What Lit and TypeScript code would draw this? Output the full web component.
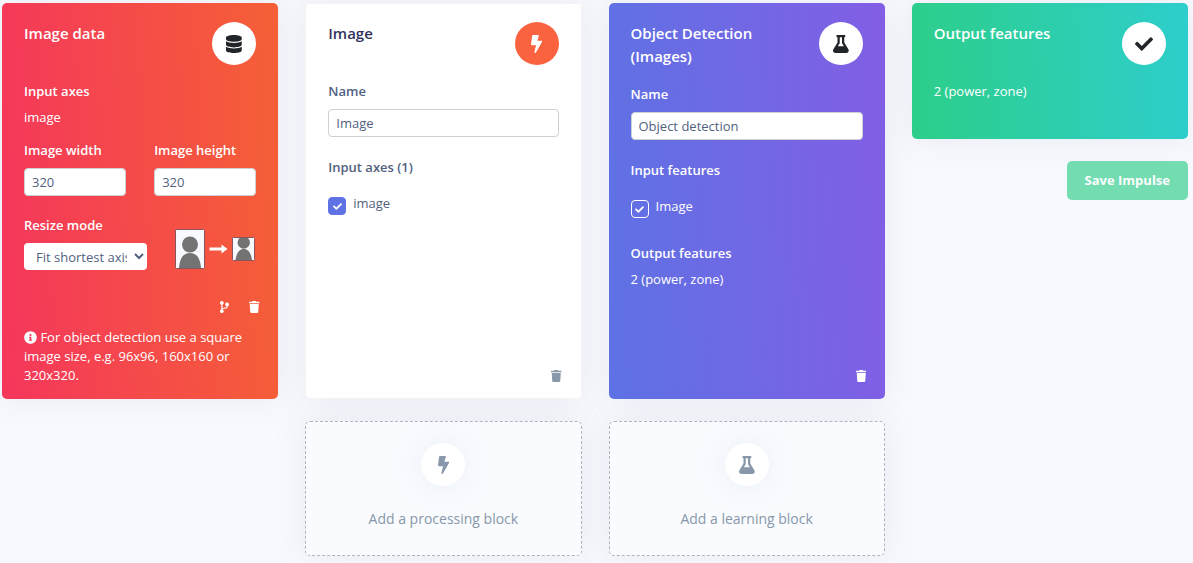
import { LitElement, html, css, svg } from "lit";
import { customElement, property } from "lit/decorators.js";

type IconDef = { w: number; d: string };

const ICONS: Record<string, IconDef> = {
  database: {
    w: 448,
    d: "M448 73.143v45.714C448 159.143 347.667 192 224 192S0 159.143 0 118.857V73.143C0 32.857 100.333 0 224 0s224 32.857 224 73.143zM448 176v102.857C448 319.143 347.667 352 224 352S0 319.143 0 278.857V176c48.125 33.143 136.208 48.572 224 48.572S399.874 209.143 448 176zm0 160v102.857C448 479.143 347.667 512 224 512S0 479.143 0 438.857V336c48.125 33.143 136.208 48.572 224 48.572S399.874 369.143 448 336z",
  },
  bolt: {
    w: 320,
    d: "M296 160H180.6l42.6-129.8C227.2 15 215.7 0 200 0H56C44 0 33.8 8.9 32.2 20.8l-32 240C-1.7 275.2 9.5 288 24 288h118.7L96.6 482.5c-3.6 15.2 8 29.5 23.3 29.5 8.4 0 16.4-4.4 20.8-12l176-304c9.3-15.9-2.2-36-20.7-36z",
  },
  flask: {
    w: 448,
    d: "M437.2 403.5L320 215V64h8c13.3 0 24-10.7 24-24V24c0-13.3-10.7-24-24-24H120c-13.3 0-24 10.7-24 24v16c0 13.3 10.7 24 24 24h8v151L10.8 403.5C-18.5 450.6 15.3 512 70.9 512h306.2c55.7 0 89.4-61.5 60.1-108.5zM137.9 320l48.2-77.6c3.7-5.2 5.8-11.6 5.8-18.4V64h64v160c0 6.9 2.2 13.2 5.8 18.4l48.2 77.6h-172z",
  },
  check: {
    w: 512,
    d: "M173.898 439.404l-166.4-166.4c-9.997-9.997-9.997-26.206 0-36.204l36.203-36.204c9.997-9.998 26.207-9.998 36.204 0L192 312.69 432.095 72.596c9.997-9.997 26.207-9.997 36.204 0l36.203 36.204c9.997 9.997 9.997 26.206 0 36.204l-294.4 294.401c-9.998 9.997-26.207 9.997-36.204-.001z",
  },
  trash: {
    w: 448,
    d: "M432 32H312l-9.4-18.7A24 24 0 0 0 281.1 0H166.8a23.72 23.72 0 0 0-21.4 13.3L136 32H16A16 16 0 0 0 0 48v32a16 16 0 0 0 16 16h416a16 16 0 0 0 16-16V48a16 16 0 0 0-16-16zM53.2 467a48 48 0 0 0 47.9 45h245.8a48 48 0 0 0 47.9-45L416 128H32z",
  },
  branch: {
    w: 384,
    d: "M384 144c0-44.2-35.8-80-80-80s-80 35.8-80 80c0 36.4 24.3 67.1 57.5 76.8-.6 16.1-4.2 28.5-11 36.9-15.4 19.2-49.3 22.4-85.2 25.7-28.2 2.6-57.4 5.4-81.3 16.9v-144c32.5-10.2 56-40.5 56-76.3 0-44.2-35.8-80-80-80S0 35.8 0 80c0 35.8 23.5 66.1 56 76.3v199.3C23.5 365.9 0 396.2 0 432c0 44.2 35.8 80 80 80s80-35.8 80-80c0-34-21.2-63.1-51.2-74.6 3.1-5.2 7.8-9.8 14.9-13.4 16.2-8.2 40.4-10.4 66.1-12.8 42.2-3.9 90-8.4 118.2-43.4 14-17.4 21.1-39.8 21.6-67.9 31.6-10.8 54.4-40.7 54.4-75.9z",
  },
  info: {
    w: 512,
    d: "M256 8C119.043 8 8 119.083 8 256c0 136.997 111.043 248 248 248s248-111.003 248-248C504 119.083 392.957 8 256 8zm0 110c23.196 0 42 18.804 42 42s-18.804 42-42 42-42-18.804-42-42 18.804-42 42-42zm56 254c0 6.627-5.373 12-12 12h-88c-6.627 0-12-5.373-12-12v-24c0-6.627 5.373-12 12-12h12v-64h-12c-6.627 0-12-5.373-12-12v-24c0-6.627 5.373-12 12-12h64c6.627 0 12 5.373 12 12v100h12c6.627 0 12 5.373 12 12v24z",
  },
};

const icon = (name: string, cls = "icon") => html`<svg
  class=${cls}
  viewBox="0 0 ${ICONS[name].w} 512"
  aria-hidden="true"
>
  ${svg`<path fill="currentColor" d=${ICONS[name].d} />`}
</svg>`;

@customElement("impulse-card")
export class ImpulseCard extends LitElement {
  @property() heading = "";
  @property() icon = "bolt";
  @property({ reflect: true }) tone = "plain";

  static styles = css`
    :host {
      display: flex;
      flex-direction: column;
      box-sizing: border-box;
      padding: 19px 22px 14px;
      border-radius: 5px;
      color: #fff;
      box-shadow: 0 0 32px rgba(136, 152, 170, 0.15);
    }
    :host([tone="red"]) {
      background: linear-gradient(87deg, #f5365c, #f56036);
    }
    :host([tone="plain"]) {
      padding: 19px 23px 14px;
      background: #fff;
      color: #525f7f;
      box-shadow: inset 0 0 0 1px rgba(0, 0, 0, 0.04), 0 0 32px rgba(136, 152, 170, 0.15);
    }
    :host([tone="indigo"]) {
      background: linear-gradient(87deg, #5e72e4, #825ee4);
    }
    :host([tone="green"]) {
      background: linear-gradient(87deg, #2dce89, #2dcecc);
    }
    .head {
      display: flex;
      justify-content: space-between;
      align-items: flex-start;
      gap: 16px;
      margin-bottom: 17px;
    }
    .title {
      margin: 0;
      font-size: 15px;
      line-height: 23px;
      font-weight: 600;
    }
    .badge {
      flex: none;
      display: grid;
      place-items: center;
      width: 44px;
      height: 43px;
      border-radius: 50%;
      background: #fff;
      color: #212529;
    }
    :host([tone="plain"]) .title {
      color: #32325d;
    }
    :host([tone="plain"]) .badge {
      background: #fb6340;
      color: #fff;
    }
    .icon {
      height: 18px;
    }
  `;

  render() {
    return html`
      <div class="head">
        <h2 class="title">${this.heading}</h2>
        <span class="badge">${icon(this.icon)}</span>
      </div>
      <slot></slot>
    `;
  }
}

@customElement("app-root")
export class AppRoot extends LitElement {
  static styles = css`
    :host {
      display: block;
      box-sizing: border-box;
      min-height: 100vh;
      padding: 3px 5px 7px 2px;
      background: #f8f9fe;
      font-family: "Open Sans", sans-serif;
      font-size: 13px;
      line-height: 16px;
      color: #525f7f;
    }
    .board {
      display: grid;
      grid-template-columns: repeat(4, minmax(0, 1fr));
      column-gap: 27px;
      row-gap: 22px;
    }
    .output {
      display: flex;
      flex-direction: column;
      gap: 22px;
    }
    .output-card {
      min-height: 136px;
    }
    .label {
      display: block;
      font-weight: 600;
      line-height: 18px;
      margin-bottom: 9px;
    }
    .value {
      margin: 0;
    }
    .summary {
      margin: 0;
      line-height: 18px;
    }
    .pair {
      display: grid;
      grid-template-columns: 1fr 1fr;
      gap: 28px;
      margin: 16px 0 20px;
    }
    .name {
      margin-bottom: 21px;
    }
    .input {
      display: block;
      box-sizing: border-box;
      width: 100%;
      height: 28px;
      padding: 0 7px;
      border: 1px solid #cad1d7;
      border-radius: 4px;
      background: #fff;
      color: #525f7f;
      font: inherit;
    }
    .resize {
      display: flex;
      justify-content: space-between;
      align-items: flex-end;
    }
    .select {
      display: block;
      width: 123px;
      height: 27px;
      padding: 0 4px 0 8px;
      border: 0;
      border-radius: 4px;
      background: #fff;
      color: #525f7f;
      font: inherit;
    }
    .figure {
      width: 82px;
      height: 42px;
    }
    .actions {
      display: flex;
      justify-content: flex-end;
      gap: 10px;
      margin: auto -8px 0 0;
    }
    .spaced {
      margin-top: 28px;
      margin-bottom: 12px;
    }
    .action {
      display: grid;
      place-items: center;
      width: 20px;
      height: 18px;
      padding: 0;
      border: 0;
      background: none;
      color: inherit;
      cursor: pointer;
    }
    .muted {
      color: #8898aa;
    }
    .small {
      height: 12px;
    }
    .note {
      margin: 0;
      line-height: 19px;
    }
    .info {
      height: 13px;
      vertical-align: -2px;
    }
    .options {
      margin: 10px 0 26px;
    }
    .option {
      display: flex;
      align-items: flex-start;
      gap: 7px;
    }
    .tick {
      display: grid;
      place-items: center;
      margin-top: 2px;
      color: #fff;
    }
    .box {
      grid-area: 1 / 1;
      appearance: none;
      box-sizing: border-box;
      width: 18px;
      height: 18px;
      margin: 0;
      border: 1px solid #fff;
      border-radius: 4px;
    }
    .filled {
      border-color: #5e72e4;
      background: #5e72e4;
    }
    .mark {
      grid-area: 1 / 1;
      height: 9px;
      pointer-events: none;
    }
    .save {
      align-self: flex-end;
      height: 39px;
      padding: 0 18px 2px;
      border: 0;
      border-radius: 5px;
      background: #2dce89;
      color: #fff;
      font: inherit;
      font-weight: 700;
      opacity: 0.65;
    }
    .add {
      display: flex;
      flex-direction: column;
      align-items: center;
      gap: 22px;
      padding: 21px 21px 26px;
      border: 1px dashed #adb5bd;
      border-radius: 5px;
      background: #f9fbff;
      color: #8898aa;
      font: inherit;
      font-size: 14px;
      line-height: 21px;
      box-shadow: 0 0 32px rgba(136, 152, 170, 0.15);
      cursor: pointer;
    }
    .processing {
      grid-column: 2;
    }
    .learning {
      grid-column: 3;
    }
    .circle {
      display: grid;
      place-items: center;
      width: 44px;
      height: 43px;
      border-radius: 50%;
      background: #fff;
      box-shadow: 0 0 32px rgba(136, 152, 170, 0.15);
    }
    .icon {
      height: 18px;
    }
  `;

  private field(id: string, label: string, value: string) {
    return html`<div>
      <label class="label" for=${id}>${label}</label>
      <input class="input" id=${id} type="text" .value=${value} />
    </div>`;
  }

  private option(label: string, filled: boolean) {
    return html`<label class="option">
      <span class="tick">
        <input class="box ${filled ? "filled" : ""}" type="checkbox" checked />
        ${icon("check", "mark")}
      </span>
      <span>${label}</span>
    </label>`;
  }

  private action(name: string, label: string, cls = "") {
    return html`<button class="action ${cls}" type="button" aria-label=${label}>
      ${icon(name, "small")}
    </button>`;
  }

  private figure() {
    return html`<svg class="figure" viewBox="0 0 82 42" aria-hidden="true">
      <rect x="1.5" y="1.5" width="29" height="39" rx="1" fill="#f8f9fe" stroke="#8b5560" />
      <circle cx="16" cy="16.500" r="8" fill="#737373" />
      <path d="M5 40C6 29 10 25 16 25s10 4 11 15z" fill="#737373" />
      <path d="M35.500 19.500h12v-3l6 4.500-6 4.500v-3h-12z" fill="#fff" />
      <rect x="58.500" y="9.500" width="22" height="23" rx="1" fill="#f8f9fe" stroke="#8b5560" />
      <path d="M65.500 10h8.500a6.200 6.200 0 1 1-8.500 0z" fill="#737373" />
      <path d="M61.500 32C62.500 24.500 65.500 21 69.750 21S77 24.500 78 32z" fill="#737373" />
    </svg>`;
  }

  render() {
    return html`
      <main class="board">
        <impulse-card heading="Image data" icon="database" tone="red">
          <span class="label">Input axes</span>
          <p class="value">image</p>
          <div class="pair">
            ${this.field("width", "Image width", "320")}
            ${this.field("height", "Image height", "320")}
          </div>
          <div class="resize">
            <div>
              <label class="label" for="mode">Resize mode</label>
              <select class="select" id="mode">
                <option>Fit shortest axis</option>
                <option>Fit longest axis</option>
                <option>Squash</option>
              </select>
            </div>
            ${this.figure()}
          </div>
          <div class="actions spaced">
            ${this.action("branch", "Versions")} ${this.action("trash", "Delete block")}
          </div>
          <p class="note">
            ${icon("info", "info")} For object detection use a square image size, e.g. 96x96,
            160x160 or 320x320.
          </p>
        </impulse-card>

        <impulse-card heading="Image" icon="bolt" tone="plain">
          <div class="name">${this.field("dsp-name", "Name", "Image")}</div>
          <span class="label">Input axes (1)</span>
          <div class="options">${this.option("image", true)}</div>
          <div class="actions">${this.action("trash", "Delete block", "muted")}</div>
        </impulse-card>

        <impulse-card heading="Object Detection (Images)" icon="flask" tone="indigo">
          <div class="name">${this.field("learn-name", "Name", "Object detection")}</div>
          <span class="label">Input features</span>
          <div class="options">${this.option("Image", false)}</div>
          <span class="label">Output features</span>
          <p class="value">2 (power, zone)</p>
          <div class="actions">${this.action("trash", "Delete block")}</div>
        </impulse-card>

        <div class="output">
          <impulse-card class="output-card" heading="Output features" icon="check" tone="green">
            <p class="summary">2 (power, zone)</p>
          </impulse-card>
          <button class="save" type="button">Save Impulse</button>
        </div>

        <button class="add processing" type="button">
          <span class="circle">${icon("bolt")}</span>
          <span>Add a processing block</span>
        </button>
        <button class="add learning" type="button">
          <span class="circle">${icon("flask")}</span>
          <span>Add a learning block</span>
        </button>
      </main>
    `;
  }
}
